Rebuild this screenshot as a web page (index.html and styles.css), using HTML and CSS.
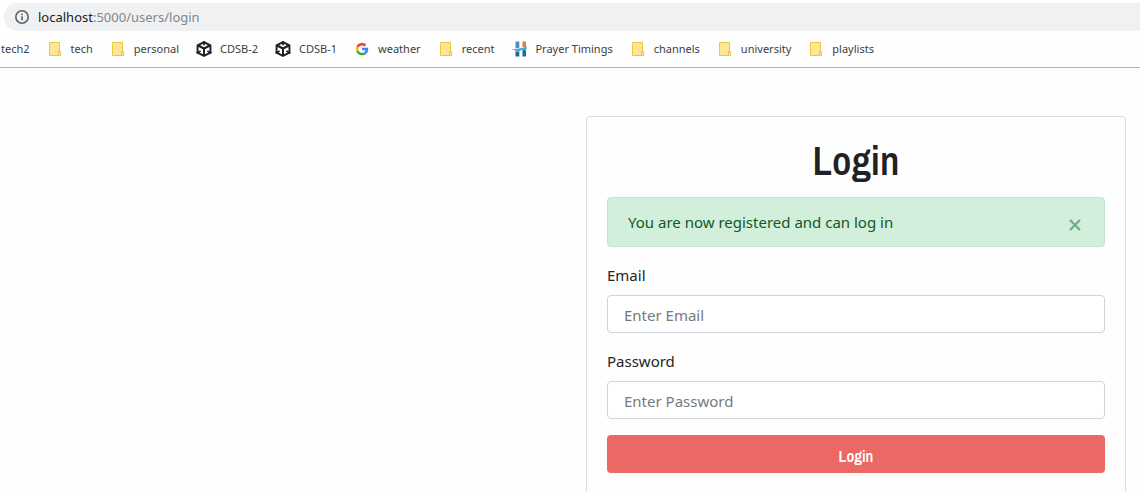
FILE: index.html
```html
<!DOCTYPE html>
<html lang="en">
<head>
<meta charset="utf-8">
<title>Login</title>
<link rel="stylesheet" href="styles.css">
</head>
<body>
<svg class="defs" width="0" height="0" aria-hidden="true">
  <symbol id="folder" viewBox="0 0 16 16">
    <path d="M2.500 1.500h10v9.500h1v3.500h-11z" fill="#ffe694" stroke="#ebc748"/>
    <path d="M11.500 14v-3.500h2v4" fill="#ffe694" stroke="#ebc748"/>
  </symbol>
  <symbol id="cube" viewBox="0 0 16 16">
    <path d="M8 0 15.400 3.800v8.400L8 16 .6 12.200V3.800z" fill="#202124"/>
    <path d="M8 2.200 11.800 4.200 8 6.200 4.200 4.200z" fill="#fff"/>
    <path d="M2.500 5.900 7 8.300v5L2.500 10.900zM13.500 5.900 9 8.300v5l4.500-2.400z" fill="#fff"/>
    <path d="M8 0v4.300M.6 12.200l4-2.200M15.400 12.200l-4-2.200" fill="none" stroke="#202124" stroke-width="1.800"/>
  </symbol>
  <symbol id="google" viewBox="0 0 44 44">
    <path fill="#ea4335" d="M22 12.500c2.700 0 5.100.9 7 2.700l5-5A17.500 17.500 0 0 0 6.400 14.200l5.900 4.600C13.700 14.700 17.500 12.500 22 12.500z"/>
    <path fill="#fbbc05" d="M6.400 14.200a17.600 17.600 0 0 0 0 15.700l6-4.700a10.500 10.500 0 0 1 0-6.400z"/>
    <path fill="#34a853" d="M22 39.500c4.700 0 8.700-1.500 11.600-4.200L28 30.900c-5 3.400-13 2-15.600-5.700l-6 4.700A17.500 17.500 0 0 0 22 39.500z"/>
    <path fill="#4285f4" d="M39 22.400c0-1.300-.1-2.400-.3-3.600H22v6.800h9.500c-.4 2.200-1.700 4.100-3.500 5.300l5.600 4.400c3.500-3.100 5.400-7.600 5.400-12.900z"/>
  </symbol>
  <symbol id="mosque" viewBox="0 0 16 16">
    <path d="M4.500.5h3.800V7H4.500z" fill="#4a93b8"/>
    <path d="M11.500.5H15V6h-3.500z" fill="#db8250"/>
    <path d="M4.500 10.500h3.800v5H4.500zM11.500 9H15v6.500h-3.500z" fill="#176a98"/>
    <path d="M0 8.500C5 8 10 7.500 16 5.500L15 10c-3-1.500-5-1.200-7 .8H4.500V9.300z" fill="#47acd5"/>
  </symbol>
</svg>

<header class="browser">
  <div class="address">
    <svg class="info" viewBox="0 0 16 16" aria-hidden="true"><circle cx="8" cy="8" r="6.200" fill="none" stroke="#5f6368" stroke-width="1.600"/><path d="M7.200 7.200h1.600v4H7.200zM7.200 4.600h1.600v1.600H7.200z" fill="#5f6368"/></svg>
    <span class="url"><span class="host">localhost</span>:5000/users/login</span>
  </div>
  <nav class="bookmarks" aria-label="Bookmarks">
    <a class="bookmark" href="#">tech2</a>
    <a class="bookmark" href="#"><svg class="icon"><use href="#folder"/></svg>tech</a>
    <a class="bookmark" href="#"><svg class="icon"><use href="#folder"/></svg>personal</a>
    <a class="bookmark" href="#"><svg class="icon"><use href="#cube"/></svg>CDSB-2</a>
    <a class="bookmark" href="#"><svg class="icon"><use href="#cube"/></svg>CDSB-1</a>
    <a class="bookmark" href="#"><svg class="icon"><use href="#google"/></svg>weather</a>
    <a class="bookmark" href="#"><svg class="icon"><use href="#folder"/></svg>recent</a>
    <a class="bookmark" href="#"><svg class="icon"><use href="#mosque"/></svg>Prayer Timings</a>
    <a class="bookmark" href="#"><svg class="icon"><use href="#folder"/></svg>channels</a>
    <a class="bookmark" href="#"><svg class="icon"><use href="#folder"/></svg>university</a>
    <a class="bookmark" href="#"><svg class="icon"><use href="#folder"/></svg>playlists</a>
  </nav>
</header>

<main class="page">
  <form class="card">
    <h1 class="title">Login</h1>
    <div class="alert" role="alert">
      <span>You are now registered and can log in</span>
      <button class="close" type="button" aria-label="Close"><svg class="cross" viewBox="0 0 12 12" aria-hidden="true"><path d="M1 1l10 10M11 1L1 11" stroke="currentColor" stroke-width="2.200"/></svg></button>
    </div>
    <div class="field">
      <label for="email">Email</label>
      <input class="input" id="email" type="email" placeholder="Enter Email">
    </div>
    <div class="field">
      <label for="password">Password</label>
      <input class="input" id="password" type="password" placeholder="Enter Password">
    </div>
    <button class="submit" type="submit">Login</button>
  </form>
</main>
</body>
</html>
```
FILE: styles.css
```css
* {
  box-sizing: border-box;
}

body {
  display: flex;
  flex-direction: column;
  height: 100vh;
  margin: 0;
  overflow: hidden;
  background: #fefefe;
  color: #212529;
  font: 15px/24px "Noto Sans", "Open Sans", sans-serif;
}

.defs {
  position: absolute;
}

.browser {
  flex: none;
  border-bottom: 1px solid #b2b4b6;
}

.address {
  display: flex;
  align-items: center;
  gap: 8px;
  height: 28px;
  margin: 3px 0 0 4px;
  padding-left: 10px;
  border-radius: 14px 0 0 14px;
  background: #f0f1f3;
}

.info {
  width: 16px;
  height: 16px;
}

.url {
  color: #80868b;
  font-size: 13px;
}

.host {
  color: #202124;
}

.bookmarks {
  display: flex;
  align-items: center;
  gap: 17px;
  height: 36px;
  padding-left: 1px;
}

.bookmark {
  display: flex;
  align-items: center;
  gap: 8px;
  color: #3c4043;
  font-size: 11px;
  line-height: 16px;
  text-decoration: none;
  white-space: nowrap;
}

.icon {
  width: 16px;
  height: 16px;
}

.page {
  flex: 1;
  display: flex;
  justify-content: flex-end;
  padding: 48px 14px 0;
}

.card {
  flex: none;
  width: 100%;
  max-width: 540px;
  height: 100%;
  min-height: 400px;
  padding: 20px;
  border: 1px solid #dcdddf;
  border-radius: 4px;
}

.title {
  margin: 0 0 12px;
  font: 600 40px/48px "Archivo Narrow", "Roboto Condensed", Roboto, sans-serif;
  color: #202224;
  text-align: center;
}

.alert {
  display: flex;
  align-items: center;
  justify-content: space-between;
  margin-bottom: 16px;
  padding: 12px 20px;
  border: 1px solid #c0e8cd;
  border-radius: 4px;
  background: #d1efdb;
  color: #155724;
}

.close {
  display: flex;
  padding: 6px 3px 0;
  border: 0;
  background: none;
  color: #75aa86;
}

.cross {
  width: 12px;
  height: 12px;
}

.field {
  display: flex;
  flex-direction: column;
  gap: 8px;
  margin-bottom: 16px;
}

.input {
  width: 100%;
  height: 38px;
  padding: 7px 16px 5px;
  border: 1px solid #ced4da;
  border-radius: 4px;
  background: #fff;
  color: #495057;
  font: inherit;
}

.input::placeholder {
  color: #777a7d;
  opacity: 1;
}

.submit {
  width: 100%;
  height: 38px;
  padding: 4px 0 0;
  border: 0;
  border-radius: 4px;
  background: #eb6864;
  color: #fff;
  font: 600 16px/24px "Archivo Narrow", "Roboto Condensed", Roboto, sans-serif;
}
```
